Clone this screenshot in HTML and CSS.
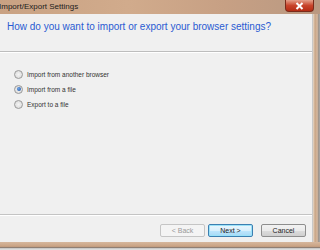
FILE: index.html
```html
<!DOCTYPE html>
<html lang="en">
<head>
    <meta charset="UTF-8">
    <title>Import/Export Settings</title>
    <link rel="stylesheet" href="styles.css">
</head>
<body>
    <div class="window">
        <div class="titlebar">
            <span class="title">Import/Export Settings</span>
            <button class="close">
                <svg width="9" height="8" viewBox="0 0 9 8"><path d="M1.5 1 L7.5 7 M7.5 1 L1.5 7" stroke="#fff" stroke-width="2"/></svg>
            </button>
        </div>
        <div class="middle">
            <div class="dialog">
                <div class="header">
                    <h1>How do you want to import or export your browser settings?</h1>
                </div>
                <div class="options">
                    <label class="option"><span class="radio"></span>Import from another browser</label>
                    <label class="option"><span class="radio checked"></span>Import from a file</label>
                    <label class="option"><span class="radio"></span>Export to a file</label>
                </div>
                <div class="footer">
                    <button class="btn" disabled>&lt; Back</button>
                    <button class="btn default">Next &gt;</button>
                    <button class="btn cancel">Cancel</button>
                </div>
            </div>
            <div class="frame-right"></div>
        </div>
        <div class="frame-bottom"></div>
    </div>
</body>
</html>
```

FILE: styles.css
```css
body {
    margin: 0;
    font-family: 'Liberation Sans', Arial, sans-serif;
    background: #d8d8d8;
    overflow: hidden;
}

.window {
    width: 320px;
    height: 250px;
    display: flex;
    flex-direction: column;
}

.titlebar {
    height: 14px;
    display: flex;
    align-items: flex-start;
    justify-content: space-between;
    background: linear-gradient(to right, #c9a283, #d1ab8c 40%, #c7a084 70%, #b99982);
}

.title {
    font-size: 8px;
    color: #1c1c1c;
    line-height: 13px;
    margin-left: -1px;
}

.close {
    width: 29px;
    height: 12px;
    margin-right: 6px;
    padding: 0;
    border: 1px solid #7a2a1a;
    border-top: none;
    border-radius: 0 0 4px 4px;
    background: linear-gradient(#e5a08a, #c8442b 50%, #b52c14);
    display: flex;
    align-items: center;
    justify-content: center;
}

.middle {
    height: 228px;
    display: flex;
}

.dialog {
    flex: 1;
    background: #f0f0f0;
    border-right: 1px solid #c8c8c8;
    display: flex;
    flex-direction: column;
}

.header {
    height: 37px;
    border-bottom: 1px solid #bdbdbd;
    box-shadow: 0 1px 0 #fff;
}

h1 {
    margin: 7px 0 0 7px;
    font-size: 10px;
    font-weight: normal;
    color: #2a5bd2;
}

.options {
    flex: 1;
    padding: 17px 0 0 14px;
    display: flex;
    flex-direction: column;
    gap: 5px;
}

.option {
    display: flex;
    align-items: center;
    gap: 4px;
    font-size: 6.5px;
    color: #333;
    height: 10px;
}

.radio {
    width: 7px;
    height: 7px;
    border-radius: 50%;
    border: 1px solid #9a9a9a;
    background: radial-gradient(#f4f4f4, #d6d6d6);
    display: flex;
    align-items: center;
    justify-content: center;
}

.radio.checked::after {
    content: "";
    width: 4px;
    height: 4px;
    border-radius: 50%;
    background: radial-gradient(circle at 40% 40%, #6fa4e8, #1d4f9c);
}

.footer {
    height: 28px;
    border-top: 1px solid #c4c4c4;
    box-shadow: inset 0 1px 0 #fff;
    display: flex;
    align-items: flex-start;
    justify-content: flex-end;
    padding: 9px 6px 0 0;
    box-sizing: border-box;
    gap: 3px;
}

.btn {
    width: 45px;
    height: 13px;
    padding: 0;
    font-family: inherit;
    font-size: 7px;
    color: #222;
    border: 1px solid #8e8e8e;
    border-radius: 2px;
    background: linear-gradient(#f2f2f2, #ebebeb 50%, #dcdcdc 51%, #cfcfcf);
}

.btn:disabled {
    color: #9a9a9a;
    border-color: #c5c5c5;
    background: #f4f4f4;
}

.btn.default {
    border-color: #3c7fb1;
    background: linear-gradient(#eaf6fd, #d9f0fc 50%, #bee6fd 51%, #a7d9f5);
    box-shadow: inset 0 0 0 1px #9be2f8;
}

.btn.cancel {
    margin-left: 5px;
}

.frame-right {
    width: 7px;
    background: linear-gradient(to right, #e6d8c8, #c9a586 30%, #d6b89e 60%, #8f8a86 85%, #b8b8b8);
}

.frame-bottom {
    height: 8px;
    background: linear-gradient(#d6b79d, #c9a283 55%, #8b7c72 70%, #cfcfcf 82%, #e4e4e4);
}
```
